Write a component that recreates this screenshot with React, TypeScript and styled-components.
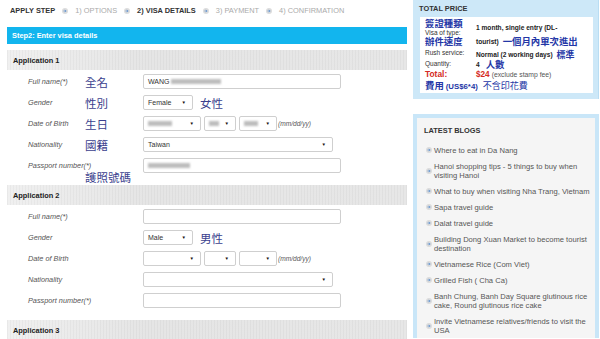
import styled, { createGlobalStyle } from 'styled-components';

const GlobalStyle = createGlobalStyle`
  html, body { margin: 0; padding: 0; background: #fff; }
  body {
    font-family: 'Liberation Sans', Arial, sans-serif;
    width: 600px;
    height: 339px;
    overflow: hidden;
    color: #333;
  }
`;

const CJK = `'Noto Sans CJK TC', 'Noto Sans CJK SC', sans-serif`;

const Page = styled.div`
  display: flex;
  width: 600px;
  height: 339px;
  overflow: hidden;
`;

const Main = styled.main`
  width: 400px;
  padding-left: 7px;
  flex-shrink: 0;
`;

const Steps = styled.div`
  height: 21px;
  margin-bottom: 6px;
  padding-left: 3px;
  display: flex;
  align-items: center;
  gap: 7px;
  font-size: 7.4px;
`;

const Step = styled.span<{ $active?: boolean }>`
  color: ${p => (p.$active ? '#333' : '#aaa')};
  font-weight: ${p => (p.$active ? 'bold' : 'normal')};
  white-space: nowrap;
`;

const StepBar = styled.div`
  height: 17px;
  background: #12b5ee;
  color: #fff;
  font-size: 7.4px;
  font-weight: bold;
  padding-left: 5px;
  display: flex;
  align-items: center;
  margin-bottom: 6px;
`;

const Section = styled.section`
  padding-bottom: 9px;
`;

const SectionHead = styled.div`
  height: 20px;
  display: flex;
  align-items: center;
  padding-left: 6px;
  margin-bottom: 1px;
  font-size: 7.4px;
  font-weight: bold;
  color: #222;
  background:
    repeating-linear-gradient(90deg, rgba(0, 0, 0, 0.03) 0 1px, transparent 1px 3px),
    linear-gradient(90deg, #f0f0f0, #e5e5e5 35%, #e7e7e7);
`;

const Row = styled.div`
  height: 21px;
  display: grid;
  grid-template-columns: 57px 58px 1fr;
  align-items: center;
  padding-left: 21px;
`;

const Label = styled.span`
  font-size: 7.3px;
  font-style: italic;
  color: #555;
  white-space: nowrap;
`;

const Note = styled.span<{ $below?: boolean }>`
  font-family: ${CJK};
  font-size: 11.5px;
  line-height: 12px;
  color: #3b3f8e;
  white-space: nowrap;
  ${p => (p.$below ? 'align-self: start; height: 0; margin-top: 16px;' : '')}
`;

const Controls = styled.div`
  display: flex;
  align-items: center;
  gap: 3px;
`;

const Input = styled.div<{ $w: number }>`
  width: ${p => p.$w}px;
  height: 15px;
  box-sizing: border-box;
  border: 1px solid #cfcfcf;
  border-radius: 2px;
  background: #fff;
  display: flex;
  align-items: center;
  padding: 0 4px;
  font-size: 7px;
  color: #333;
`;

const Select = styled(Input)`
  padding-right: 6px;
  &::after {
    content: '▼';
    margin-left: auto;
    font-size: 4.5px;
    color: #111;
  }
`;

const Blur = styled.span<{ $w: number; $ml?: number }>`
  display: inline-block;
  width: ${p => p.$w}px;
  height: 5px;
  margin-left: ${p => p.$ml ?? 0}px;
  background: #bdbdbd;
  filter: blur(1.2px);
`;

const Hint = styled.span`
  font-size: 6.6px;
  font-style: italic;
  color: #555;
  margin-left: -2px;
`;

const GenderNote = styled(Note)`
  margin-left: 4px;
`;

/* sidebar */

const Side = styled.aside`
  width: 186px;
  margin-left: 6px;
  flex-shrink: 0;
`;

const PriceBox = styled.div`
  background: #cde8f8;
  border-right: 1px solid #b9ddf3;
  padding: 0 5px 6px 7px;
`;

const BoxTitle = styled.div`
  height: 17px;
  display: flex;
  align-items: center;
  font-size: 7.4px;
  font-weight: bold;
  color: #333;
  margin-left: -1px;
`;

const PriceInner = styled.div`
  background: #fff;
  padding: 1px 0 3px 5px;
  display: grid;
  grid-template-columns: 51px 1fr;
  line-height: 9px;
`;

const PLabel = styled.div<{ $h: number }>`
  height: ${p => p.$h}px;
  display: flex;
  flex-direction: column;
  justify-content: center;
  gap: 1px;
  font-size: 6.5px;
  line-height: 8px;
  color: #333;
  white-space: nowrap;
`;

const PValue = styled.div<{ $h: number; $gap?: number; $low?: boolean }>`
  height: ${p => p.$h}px;
  display: flex;
  align-items: ${p => (p.$low ? 'flex-end' : 'center')};
  gap: ${p => p.$gap ?? 4}px;
  font-size: 6.6px;
  font-weight: bold;
  color: #222;
  white-space: nowrap;
`;

const Zh = styled.span<{ $size?: number; $light?: boolean }>`
  font-family: ${CJK};
  font-weight: ${p => (p.$light ? 'normal' : 'bold')};
  font-size: ${p => p.$size ?? 9.4}px;
  line-height: 9px;
  color: #2336a6;
`;

const Red = styled.span<{ $size: number }>`
  font-size: ${p => p.$size}px;
  line-height: 9px;
  font-weight: bold;
  color: #d42a22;
`;

const Grey = styled.span`
  font-size: 6.8px;
  font-weight: normal;
  color: #555;
`;

const FeeRow = styled.div`
  grid-column: 1 / -1;
  height: 10px;
  margin-top: 1px;
  display: flex;
  align-items: center;
  gap: 5px;
`;

const FeeUsd = styled.span`
  font-size: 7.8px;
  font-weight: bold;
  color: #2336a6;
  margin-left: 2px;
`;

const BlogBox = styled.div`
  margin-top: 15px;
  border: 4px solid #c9e6f8;
  border-bottom: none;
  background: #f5f5f5;
`;

const BlogTitle = styled.div`
  height: 24px;
  display: flex;
  align-items: center;
  padding-left: 7px;
  font-size: 7.4px;
  font-weight: bold;
  color: #333;
`;

const BlogList = styled.ul`
  list-style: none;
  margin: 0;
  padding: 0;
`;

const BlogItem = styled.li`
  display: flex;
  align-items: center;
  gap: 2px;
  padding: 3.5px 0 3.5px 9px;
  font-size: 7.6px;
  line-height: 9px;
  color: #555;
  white-space: nowrap;
`;

function ArrowDot({ size = 6 }: { size?: number }) {
  return (
    <svg width={size} height={size} viewBox="0 0 10 10" style={{ flexShrink: 0 }}>
      <circle cx="5" cy="5" r="5" fill="#dcdcdc" />
      <path d="M2.5 5h4.2M5 3l2 2-2 2" stroke="#5a8fcf" strokeWidth="1.3" fill="none" />
    </svg>
  );
}

const blogs: string[][] = [
  ['Where to eat in Da Nang'],
  ['Hanoi shopping tips - 5 things to buy when', 'visiting Hanoi'],
  ['What to buy when visiting Nha Trang, Vietnam'],
  ['Sapa travel guide'],
  ['Dalat travel guide'],
  ['Building Dong Xuan Market to become tourist', 'destination'],
  ['Vietnamese Rice (Com Viet)'],
  ['Grilled Fish ( Cha Ca)'],
  ['Banh Chung, Banh Day Square glutinous rice', 'cake, Round glutinous rice cake'],
  ['Invite Vietnamese relatives/friends to visit the', 'USA'],
];

interface AppData {
  n: number;
  filled: boolean;
}

function Application({ n, filled }: AppData) {
  return (
    <Section>
      <SectionHead>Application {n}</SectionHead>
      <Row>
        <Label>Full name(*)</Label>
        {filled ? <Note>全名</Note> : <span />}
        <Controls>
          <Input $w={198}>
            {filled && (
              <>
                WANG
                <Blur $w={50} $ml={1} />
              </>
            )}
          </Input>
        </Controls>
      </Row>
      <Row>
        <Label>Gender</Label>
        {filled ? <Note>性別</Note> : <span />}
        <Controls>
          <Select $w={50}>{filled ? 'Female' : 'Male'}</Select>
          <GenderNote>{filled ? '女性' : '男性'}</GenderNote>
        </Controls>
      </Row>
      <Row>
        <Label>Date of Birth</Label>
        {filled ? <Note>生日</Note> : <span />}
        <Controls>
          <Select $w={58}>{filled && <Blur $w={24} />}</Select>
          <Select $w={32}>{filled && <Blur $w={10} />}</Select>
          <Select $w={38}>{filled && <Blur $w={14} />}</Select>
          <Hint>(mm/dd/yy)</Hint>
        </Controls>
      </Row>
      <Row>
        <Label>Nationality</Label>
        {filled ? <Note>國籍</Note> : <span />}
        <Controls>
          <Select $w={190}>{filled ? 'Taiwan' : ''}</Select>
        </Controls>
      </Row>
      <Row>
        <Label>Passport number(*)</Label>
        {filled ? <Note $below>護照號碼</Note> : <span />}
        <Controls>
          <Input $w={198}>{filled && <Blur $w={42} />}</Input>
        </Controls>
      </Row>
    </Section>
  );
}

export default function App() {
  return (
    <>
      <GlobalStyle />
      <Page>
        <Main>
          <Steps>
            <Step $active>APPLY STEP</Step>
            <ArrowDot />
            <Step>1) OPTIONS</Step>
            <ArrowDot />
            <Step $active>2) VISA DETAILS</Step>
            <ArrowDot />
            <Step>3) PAYMENT</Step>
            <ArrowDot />
            <Step>4) CONFIRMATION</Step>
          </Steps>
          <StepBar>Step2: Enter visa details</StepBar>
          <Application n={1} filled />
          <Application n={2} filled={false} />
          <Section>
            <SectionHead>Application 3</SectionHead>
          </Section>
        </Main>

        <Side>
          <PriceBox>
            <BoxTitle>TOTAL PRICE</BoxTitle>
            <PriceInner>
              <PLabel $h={19}>
                <Zh>簽證種類</Zh>
                <span>Visa of type:</span>
              </PLabel>
              <PValue $h={19}>1 month, single entry (DL-</PValue>
              <PLabel $h={9}>
                <Zh>辦件速度</Zh>
              </PLabel>
              <PValue $h={9}>
                tourist) <Zh>一個月內單次進出</Zh>
              </PValue>
              <PLabel $h={13}>Rush service:</PLabel>
              <PValue $h={13} $low>
                Normal (2 working days) <Zh $size={9}>標準</Zh>
              </PValue>
              <PLabel $h={10}>Quantity:</PLabel>
              <PValue $h={10} $gap={6}>
                4 <Zh>人數</Zh>
              </PValue>
              <PLabel $h={10}>
                <Red $size={8.4}>Total:</Red>
              </PLabel>
              <PValue $h={10} $gap={2}>
                <Red $size={8.2}>$24</Red> <Grey>(exclude stamp fee)</Grey>
              </PValue>
              <FeeRow>
                <span>
                  <Zh>費用</Zh>
                  <FeeUsd>(US$6*4)</FeeUsd>
                </span>
                <Zh $light $size={9}>不含印花費</Zh>
              </FeeRow>
            </PriceInner>
          </PriceBox>

          <BlogBox>
            <BlogTitle>LATEST BLOGS</BlogTitle>
            <BlogList>
              {blogs.map(lines => (
                <BlogItem key={lines[0]}>
                  <ArrowDot size={6} />
                  <span>
                    {lines.map((l, i) => (
                      <div key={i}>{l}</div>
                    ))}
                  </span>
                </BlogItem>
              ))}
            </BlogList>
          </BlogBox>
        </Side>
      </Page>
    </>
  );
}
